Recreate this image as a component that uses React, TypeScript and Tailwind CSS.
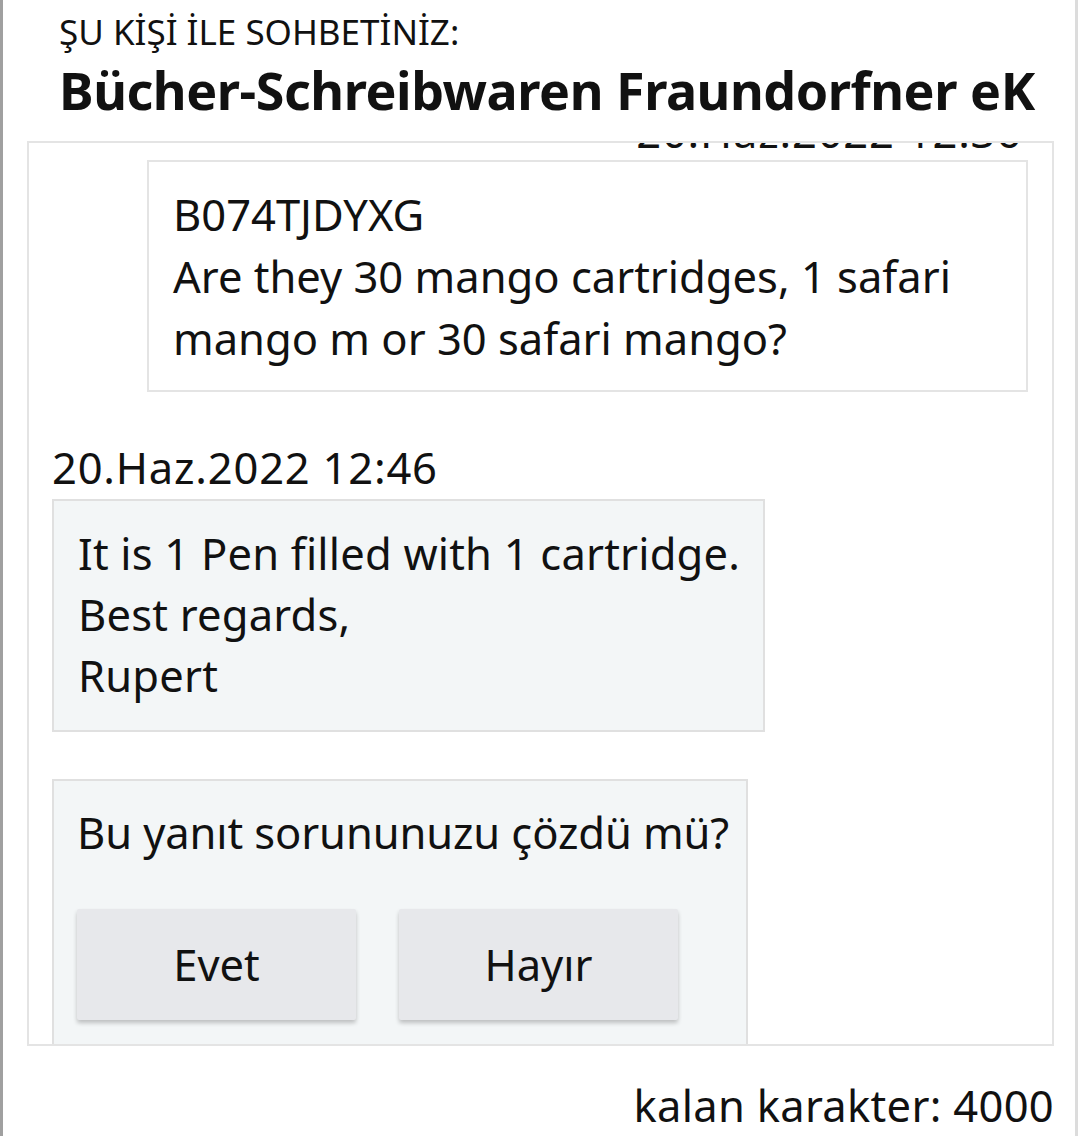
const font = { fontFamily: '"Noto Sans", "Open Sans", sans-serif' };

function FeedbackButton({ label }: { label: string }) {
  return (
    <button className="flex h-[111px] w-[279px] items-center justify-center rounded-[2px] bg-[#e7e8eb] text-[43.5px] text-[#111] shadow-[0_3px_4px_rgba(0,0,0,0.22)]">
      {label}
    </button>
  );
}

export default function App() {
  return (
    <div
      className="h-[1136px] w-[1078px] overflow-hidden border-r-[3px] border-l-[3px] border-r-[#dcdcdc] border-l-[#a0a0a0] bg-white text-[#111]"
      style={font}
    >
      <div className="pl-[56px] pt-[12px]">
        <div className="text-[35px] leading-[40px] text-[#111]">ŞU KİŞİ İLE SOHBETİNİZ:</div>
        <div className="mt-[6px] whitespace-nowrap text-[52px] font-bold leading-[64px] tracking-[-0.45px]">
          Bücher-Schreibwaren Fraundorfner eK
        </div>
      </div>

      <div className="ml-[24px] mt-[19px] h-[905px] w-[1027px] overflow-hidden border-2 border-[#e4e4e4]">
        <div className="-mt-[41px] text-[43.5px]">
          <div className="pr-[30px] text-right leading-[58px] tracking-[0.8px]">20.Haz.2022 12:36</div>
          <div className="ml-[118px] mr-[24px] border-2 border-[#e4e4e4] bg-white px-[24px] py-[21px] leading-[62px]">
            <div>B074TJDYXG</div>
            <div>Are they 30 mango cartridges, 1 safari mango m or 30 safari mango?</div>
          </div>

          <div className="ml-[23px] mt-[46px] leading-[58px] tracking-[0.8px]">20.Haz.2022 12:46</div>
          <div className="ml-[23px] mt-[3px] w-[713px] whitespace-nowrap border-2 border-[#e0e0e0] bg-[#f3f6f7] pb-[24px] pl-[24px] pt-[22px] leading-[61px] tracking-[0.2px]">
            <div>It is 1 Pen filled with 1 cartridge.</div>
            <div>Best regards,</div>
            <div>Rupert</div>
          </div>

          <div className="ml-[23px] mt-[47px] w-[696px] border-2 border-[#e0e0e0] bg-[#f3f6f7] pb-[30px] pl-[23px] pt-[20px]">
            <div className="whitespace-nowrap leading-[62px] tracking-[-0.1px]">Bu yanıt sorununuzu çözdü mü?</div>
            <div className="mt-[46px] flex gap-[43px]">
              <FeedbackButton label="Evet" />
              <FeedbackButton label="Hayır" />
            </div>
          </div>
        </div>
      </div>

      <div className="mr-[21px] mt-[29px] text-right text-[43.5px] leading-[60px] tracking-[0.3px]">kalan karakter: 4000</div>
    </div>
  );
}
